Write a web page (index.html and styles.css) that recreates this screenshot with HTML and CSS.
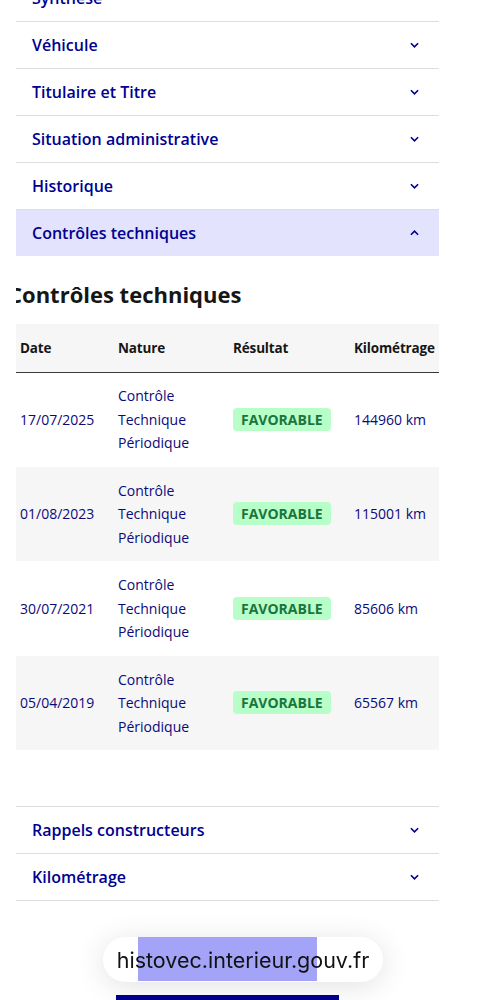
FILE: index.html
```html
<!DOCTYPE html>
<html lang="fr">
<head>
    <meta charset="utf-8">
    <link rel="stylesheet" href="styles.css">
</head>
<body>
    <div class="page">
        <!-- Accordion top -->
        <div class="accordion">
            <div class="acc-item"><span>Synthèse</span></div>
            <div class="acc-item"><span>Véhicule</span><svg class="chev" viewBox="0 0 10 6"><path d="M1 1l4 4 4-4"/></svg></div>
            <div class="acc-item"><span>Titulaire et Titre</span><svg class="chev" viewBox="0 0 10 6"><path d="M1 1l4 4 4-4"/></svg></div>
            <div class="acc-item"><span>Situation administrative</span><svg class="chev" viewBox="0 0 10 6"><path d="M1 1l4 4 4-4"/></svg></div>
            <div class="acc-item"><span>Historique</span><svg class="chev" viewBox="0 0 10 6"><path d="M1 1l4 4 4-4"/></svg></div>
            <div class="acc-item open"><span>Contrôles techniques</span><svg class="chev" viewBox="0 0 10 6"><path d="M1 5l4-4 4 4"/></svg></div>
        </div>

        <!-- Panel -->
        <div class="panel">
            <h2>Contrôles techniques</h2>
            <table class="ct-table">
                <thead>
                    <tr><th>Date</th><th>Nature</th><th>Résultat</th><th>Kilométrage</th></tr>
                </thead>
                <tbody>
                    <tr>
                        <td>17/07/2025</td>
                        <td>Contrôle Technique Périodique</td>
                        <td><span class="badge">FAVORABLE</span></td>
                        <td>144960 km</td>
                    </tr>
                    <tr>
                        <td>01/08/2023</td>
                        <td>Contrôle Technique Périodique</td>
                        <td><span class="badge">FAVORABLE</span></td>
                        <td>115001 km</td>
                    </tr>
                    <tr>
                        <td>30/07/2021</td>
                        <td>Contrôle Technique Périodique</td>
                        <td><span class="badge">FAVORABLE</span></td>
                        <td>85606 km</td>
                    </tr>
                    <tr>
                        <td>05/04/2019</td>
                        <td>Contrôle Technique Périodique</td>
                        <td><span class="badge">FAVORABLE</span></td>
                        <td>65567 km</td>
                    </tr>
                </tbody>
            </table>
        </div>

        <!-- Accordion bottom -->
        <div class="accordion bottom">
            <div class="acc-item"><span>Rappels constructeurs</span><svg class="chev" viewBox="0 0 10 6"><path d="M1 1l4 4 4-4"/></svg></div>
            <div class="acc-item"><span>Kilométrage</span><svg class="chev" viewBox="0 0 10 6"><path d="M1 1l4 4 4-4"/></svg></div>
        </div>

        <div class="main-btn"></div>
    </div>

    <!-- Browser address bar -->
    <div class="urlbar">
        <span class="url-hl"></span>
        <span class="url-text">histovec.interieur.gouv.fr</span>
    </div>
</body>
</html>
```

FILE: styles.css
```css
/* General */
body {
    margin: 0;
    font-family: "Open Sans", "Noto Sans", sans-serif;
    background: #ffffff;
    color: #161616;
    overflow: hidden;
}

.page {
    width: 423px;
    margin: -25px 0 0 16px;
}

/* Accordion */
.acc-item {
    height: 46px;
    border-bottom: 1px solid #dddddd;
    display: flex;
    align-items: center;
    justify-content: space-between;
    padding: 0 20px 0 16px;
    font-size: 16px;
    font-weight: 600;
    color: #000091;
}

.acc-item.open {
    background: #e3e3fd;
    border-bottom: none;
}

.accordion.bottom {
    margin-top: 56px;
    border-top: 1px solid #dddddd;
}

.chev {
    width: 9px;
    height: 6px;
    fill: none;
    stroke: #000091;
    stroke-width: 1.8;
}

/* Panel (horizontally scrolled, clipped) */
.panel {
    overflow: hidden;
}

.panel h2 {
    margin: 24px 0 0 -8px;
    height: 44px;
    font-size: 22px;
    font-weight: 700;
    line-height: 28px;
    color: #161616;
    white-space: nowrap;
}

.ct-table {
    width: 423px;
    border-collapse: collapse;
    table-layout: fixed;
}

.ct-table th,
.ct-table td {
    text-align: left;
    padding: 0 8px;
}

.ct-table th:first-child,
.ct-table td:first-child {
    padding-left: 4px;
}

.ct-table th:nth-child(1) { width: 82px; }
.ct-table th:nth-child(2) { width: 99px; }
.ct-table th:nth-child(3) { width: 105px; }

.ct-table thead tr {
    background: #f6f6f6;
    height: 48px;
    border-bottom: 1px solid #3a3a3a;
}

.ct-table th {
    font-size: 13.5px;
    font-weight: 700;
    letter-spacing: -0.15px;
    color: #161616;
    white-space: nowrap;
}

.ct-table tbody tr {
    height: 94.5px;
}

.ct-table tbody tr:nth-child(even) {
    background: #f6f6f6;
}

.ct-table td {
    font-size: 14px;
    line-height: 23.5px;
    color: #0a0a7a;
}

.badge {
    display: inline-block;
    background: #b8fec9;
    color: #18753c;
    font-weight: 700;
    font-size: 14px;
    line-height: 23px;
    padding: 0 8px;
    border-radius: 4px;
}

.main-btn {
    width: 223px;
    height: 40px;
    margin: 94px auto 0;
    background: #000091;
}

/* Address bar overlay */
.urlbar {
    position: fixed;
    left: 103px;
    top: 937px;
    width: 280px;
    height: 45px;
    border-radius: 23px;
    background: #ffffff;
    box-shadow: 0 4px 30px rgba(0, 0, 0, 0.12);
    display: flex;
    align-items: center;
    justify-content: center;
    overflow: hidden;
}

.url-hl {
    position: absolute;
    left: 35px;
    top: 0;
    width: 179px;
    height: 44px;
    background: #a3a3f7;
}

.url-text {
    position: relative;
    font-family: "Inter", "Liberation Sans", sans-serif;
    font-size: 21.5px;
    color: #111111;
}
```
